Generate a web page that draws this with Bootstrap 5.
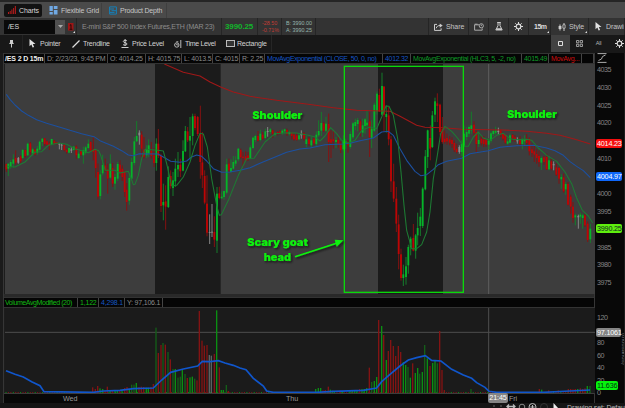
<!DOCTYPE html>
<html lang="en">
<head>
    <meta charset="UTF-8">
    <meta name="viewport" content="width=device-width, initial-scale=1.0">
    <title>/ES Charts</title>
    <link href="https://cdn.jsdelivr.net/npm/bootstrap@5.3.0/dist/css/bootstrap.min.css" rel="stylesheet">
    <style>
        body {
            width: 625px;
            height: 408px;
            background: #1d1d1d;
            color: #c4c4c4;
            font-family: "Liberation Sans", Arial, sans-serif;
            font-size: 7px;
            line-height: 1;
            letter-spacing: -0.1px;
            white-space: nowrap;
        }
        svg { display: block; flex: none; }
        .top-strip { height: 2px; background: #252525; }

        /* Tabs */
        .tab-row { height: 16px; background: #4a4a4a; padding-left: 4px; }
        .tab { height: 15px; border-right: 1px solid #3f3f3f; color: #c6c6c6; }
        .tab svg { margin-right: 3px; }
        .tab-charts { width: 38px; height: 13px; padding-left: 4px; background: #121212; border: 0; border-radius: 2px; color: #d8d8d8; }
        .tab-grid { width: 60px; padding-left: 7px; }
        .tab-depth { width: 65px; padding-left: 7px; letter-spacing: -0.2px; }

        /* Symbol row */
        .symbol-row { height: 17px; background: #333; padding-left: 4px; }
        .symbol-row > div { height: 17px; border-right: 1px solid #252525; }
        .symbol-row .symbol-box { width: 51px; height: 14px; padding-left: 4px; background: #0a0a0a; border: 0; color: #ddd; }
        .symbol-row .symbol-drop { width: 10px; height: 14px; background: #505050; border: 0; }
        .link-cell { width: 12px; padding-left: 3px; }
        .desc-cell { width: 145px; padding-left: 5px; color: #8c8c8c; letter-spacing: -0.23px; }
        .price-cell { width: 36px; padding-left: 3px; color: #12b52b; font-size: 8px; font-weight: bold; letter-spacing: -0.1px; }
        .change-cell { width: 24px; padding-left: 4px; color: #c23c35; font-size: 5.4px; line-height: 7px; letter-spacing: 0; }
        .quote-cell { width: 34px; padding-left: 4px; color: #95b5ad; font-size: 5.4px; line-height: 7px; letter-spacing: 0; }
        .share-cell { width: 41px; padding-left: 5px; border-left: 1px solid #252525; }
        .share-cell svg, .style-cell svg { margin-right: 3px; }
        .draw-cell svg { margin-right: 4px; }
        .icon-cell { width: 20px; }
        .time-cell { width: 22px; padding-left: 5px; color: #ddd; font-weight: bold; letter-spacing: -0.5px; }
        .style-cell { width: 38px; padding-left: 7px; }
        .draw-cell { width: 36px; padding-left: 6px; overflow: hidden; }
        .has-menu { position: relative; }
        .has-menu::after { content: ""; position: absolute; right: 1px; bottom: 2px; border: 1px solid transparent; border-right-color: #ddd; border-bottom-color: #ddd; }

        /* Drawing tools */
        .tool-row { height: 18px; background: #181818; padding-left: 4px; color: #d2d2d2; letter-spacing: -0.25px; }
        .tool-row > div { height: 17px; }
        .tool-pin { width: 19px; border-right: 1px solid #222; }
        .tool-pointer { width: 47px; padding-left: 6px; }
        .tool-line { width: 50px; padding-left: 2px; }
        .tool-price { width: 53px; padding-left: 1px; }
        .tool-time { width: 51px; padding-left: 1px; letter-spacing: -0.35px; }
        .tool-rect { width: 48px; padding-left: 2px; border-right: 1px solid #262626; letter-spacing: -0.2px; }
        .tool-row svg { margin-right: 3px; }
        .tool-row .tool-pointer svg { margin-right: 4px; }
        .tool-row .tool-btn svg { margin: 0; }
        .tool-row .tool-rect svg { margin-right: 2px; }
        .tool-btn { width: 19px; }
        .tool-btn.on { background: #414141; }
        .tool-all { font-size: 5.5px; color: #b5b5b5; }
        .tool-gear { width: 17px; padding-left: 7px; overflow: hidden; }

        /* Chart panes */
        .gutter { width: 4px; background: #1b1b1b; border-right: 1px solid #363636; }
        .panes { width: 591px; border-right: 1px solid #363636; }
        .data-row, .vol-row { height: 11px; background: #050505; border-top: 1px solid #333; border-bottom: 1px solid #333; color: #8b8b8b; font-size: 7px; letter-spacing: -0.2px; }
        .data-row { display: grid; grid-template-columns: 41px 63px 38px 36px 31px 27px 25px 118px 28px 111px 27px 33px 12px; }
        .data-row > span, .vol-row > span { padding: 1px 0 0 2px; border-right: 1px solid #444; overflow: hidden; line-height: 8px; }
        .data-row .title { color: #eee; font-weight: bold; letter-spacing: -0.15px; padding-left: 1px; }
        .data-row .study { letter-spacing: -0.38px; }
        .data-row .study-value { letter-spacing: -0.3px; }
        .blue { color: #1657c4; }
        .green { color: #0f9c28; }
        .red { color: #cf0d0d; }
        .price-pane { background: #3d3d3d; margin-left: 1px; }
        .pane-gap { height: 3px; background: #292929; }
        .vol-pane { background: #1b1b1b; margin-left: 1px; }
        .vol-row .vol-name { width: 74px; padding-left: 1px; color: #12b812; letter-spacing: -0.42px; }
        .vol-a { width: 21px; color: #12b812; }
        .vol-b { width: 26px; }
        .vol-c { width: 38px; }
        .time-axis { position: relative; height: 10px; background: #080808; border-top: 1px solid #3c3c3c; color: #9a9a9a; font-size: 7.2px; }
        .time-axis span { position: absolute; top: 1px; }
        .wed { left: 59px; }
        .thu { left: 282px; }
        .fri { left: 505px; }
        .time-axis .cursor-time { left: 484px; top: -1px; width: 20px; height: 10px; border-radius: 2px; background: #858585; color: #fff; line-height: 10px; text-align: center; }

        /* Value axis */
        .value-axis { position: relative; width: 29px; background: #080808; color: #858585; font-size: 7.2px; letter-spacing: -0.5px; overflow: hidden; }
        .scale-icon { height: 10px; padding-left: 2px; }
        .price-scale > div { height: 17.78px; line-height: 17.78px; padding-left: 2px; }
        .price-scale { margin-top: -2px; }
        .vol-scale { position: absolute; top: 259px; left: 2px; }
        .vol-scale > div { height: 12.5px; line-height: 12.5px; }
        .tag { position: absolute; left: 1px; width: 26px; height: 9px; padding-left: 1px; border-radius: 2px; color: #fff; line-height: 9px; letter-spacing: -0.2px; }
        .tag-red { top: 86px; background: #f50f0f; }
        .tag-blue { top: 119px; background: #0e67fa; }
        .tag-last { top: 171px; background: #5fef0e; color: #122; }
        .tag-cursor { top: 275px; width: 25px; background: #858585; }
        .tag-vol { top: 328px; width: 22px; background: #06f50c; color: #031; }
        .axis-title { position: absolute; left: 26px; top: 280px; writing-mode: vertical-rl; font-size: 6px; letter-spacing: 0; color: #777; }

        .bottom-row { height: 5px; background: #151515; padding-left: 493px; overflow: hidden; color: #bbb; }
        .bottom-text { padding: 1px 0 0 7px; }

        .note { font-family: Inter, "Liberation Sans", sans-serif; font-weight: 900; font-size: 31px; fill: #0df20d; letter-spacing: 0; }
        .shade { fill: #1b1b1b; }
        .avg { fill: none; stroke-width: 3.2; stroke-linejoin: round; }
    </style>
</head>
<body class="d-flex flex-column overflow-hidden">
    <div class="top-strip"></div>

    <!-- Tabs -->
    <div class="tab-row d-flex align-items-center">
        <div class="tab tab-charts d-flex align-items-center">
            <svg width="8" height="8" viewBox="0 0 8 8" fill="#b51c1c"><path d="M0 6h1v2H0zM1.7 5h1v3h-1zM3.4 3.5h1V8h-1zM5.1 2h1v6h-1zM6.8 0h1.1v8H6.8z"/></svg>Charts
        </div>
        <div class="tab tab-grid d-flex align-items-center">
            <svg width="9" height="9" viewBox="0 0 9 9" fill="#70a9e4"><path d="M.5 0h3.3v5H.5zM4.8 0h3.7v3H4.8zM.5 6h3.3v2.6H.5zM4.8 4h3.7v4.6H4.8z"/></svg>Flexible Grid
        </div>
        <div class="tab tab-depth d-flex align-items-center">
            <svg width="8" height="9" viewBox="0 0 8 9" fill="none" stroke="#147fb8"><path d="M.6.9h6.8v7.2H.6zM1 3h4M2.5 4.7H7M1 6.4h4.5"/></svg>Product Depth
        </div>
    </div>

    <!-- Symbol and quote -->
    <div class="symbol-row d-flex align-items-center">
        <div class="symbol-box d-flex align-items-center">/ES</div>
        <div class="symbol-drop d-flex align-items-center justify-content-center">
            <svg width="5" height="3" viewBox="0 0 5 3" fill="#aaa"><path d="M0 0h5L2.5 3z"/></svg>
        </div>
        <div class="link-cell has-menu d-flex align-items-center">
            <svg width="6" height="8" viewBox="0 0 6 8" fill="none"><rect width="5.5" height="7.5" fill="#9e1616"/><path d="M1.8 2.4 3 1.6v4.6M1.6 6.3h2.8" stroke="#260606"/></svg>
        </div>
        <div class="desc-cell d-flex align-items-center">E-mini S&amp;P 500 Index Futures,ETH (MAR 23)</div>
        <div class="price-cell d-flex align-items-center">3990.25</div>
        <div class="change-cell d-flex flex-column justify-content-center"><span>-28.50</span><span>-0.71%</span></div>
        <div class="quote-cell d-flex flex-column justify-content-center"><span>B: 3990.00</span><span>A: 3990.25</span></div>
        <div class="share-cell ms-auto d-flex align-items-center">
            <svg width="9" height="8" viewBox="0 0 9 8" fill="none" stroke="#ccc"><path d="M3 1.4H.5v6h6.6V5.3"/><path d="M2.2 5.3c.4-2 1.8-2.8 4-2.8"/><path d="M5.7.4 8.7 2.6 5.7 4.8z" fill="#ccc" stroke="none"/></svg>Share
        </div>
        <div class="icon-cell d-flex align-items-center justify-content-center">
            <svg width="10" height="8" viewBox="0 0 10 8" fill="none" stroke="#aaa"><path d="M5 1.8H.6v5.4h7.6V5.4M.6 1.2h3"/><circle cx="7.3" cy="2.8" r="2.1"/><path d="M7.3 1.6v1.5"/></svg>
        </div>
        <div class="icon-cell d-flex align-items-center justify-content-center">
            <svg width="8" height="9" viewBox="0 0 8 9" fill="none" stroke="#ccc"><path d="M2.2.5h3.6M3 .5v3.2L.8 8h6.4L5 3.7V.5"/><path d="M2 6.2h4L7 8H1z" fill="#ccc" stroke="none"/></svg>
        </div>
        <div class="icon-cell d-flex align-items-center justify-content-center">
            <svg width="9" height="9" viewBox="0 0 9 9" fill="none" stroke="#ddd"><circle cx="4.5" cy="4.5" r="2.3" stroke-width="1.2"/><path d="M4.5 0v2M4.5 7v2M0 4.5h2M7 4.5h2M1.3 1.3l1.4 1.4M6.3 6.3l1.4 1.4M1.3 7.7l1.4-1.4M6.3 2.7l1.4-1.4"/></svg>
        </div>
        <div class="time-cell has-menu d-flex align-items-center">15m</div>
        <div class="style-cell has-menu d-flex align-items-center">
            <svg width="8" height="8" viewBox="0 0 8 8"><path d="M2 1.5v6" stroke="#ccc"/><path d="M.6 3h2.8v3H.6z" fill="#ccc"/><path d="M6 0v8" stroke="#ccc"/><path d="M4.9 1.8h2.2v3.4H4.9z" fill="#333" stroke="#ccc" stroke-width=".8"/></svg>Style
        </div>
        <div class="draw-cell d-flex align-items-center">
            <svg width="7" height="9" viewBox="0 0 7 9" fill="#e2e2e2"><path d="M.5 0v7.3l1.9-1.7 1.2 3 1.5-.6-1.3-2.9H6.500z"/></svg>Drawings
        </div>
    </div>

    <!-- Drawing tools -->
    <div class="tool-row d-flex">
        <div class="tool-pin d-flex align-items-center justify-content-center">
            <svg width="5" height="8" viewBox="0 0 5 8" fill="#ccc"><path d="M1 0h3v2.600l1 1.500H3v3.400H2V4.100H0l1-1.500z"/></svg>
        </div>
        <div class="tool-pointer d-flex align-items-center">
            <svg width="7" height="9" viewBox="0 0 7 9" fill="#e2e2e2"><path d="M.5 0v7.300l1.900-1.700 1.200 3 1.500-.6-1.300-2.900h2.700z"/></svg>Pointer
        </div>
        <div class="tool-line d-flex align-items-center">
            <svg width="8" height="8" viewBox="0 0 8 8"><path d="M.5 7.500 7.500.5" stroke="#ddd" stroke-width="1.300"/></svg>Trendline
        </div>
        <div class="tool-price d-flex align-items-center">
            <svg width="8" height="9" viewBox="0 0 8 9" fill="none" stroke="#ccc"><path d="M6 2C5.500 1 2.300 1 2.300 2.500 2.300 4 6 3.300 6 5 6 6.500 2.700 6.500 2 5.500M4.100 0v7M.5 8.500h7"/></svg>Price Level
        </div>
        <div class="tool-time d-flex align-items-center">
            <svg width="8" height="8" viewBox="0 0 8 8" fill="none" stroke="#bbb"><circle cx="2.800" cy="5" r="2.200"/><path d="M2.800 3.800V5h1M6.800 0v8M2.300 1.800h2"/></svg>Time Level
        </div>
        <div class="tool-rect d-flex align-items-center">
            <svg width="9" height="7" viewBox="0 0 9 7" fill="#333" stroke="#bbb"><rect x=".5" y=".5" width="8" height="6"/></svg>Rectangle
        </div>
        <div class="tool-btn on ms-auto d-flex align-items-center justify-content-center">
            <svg width="5" height="5" viewBox="0 0 5 5" fill="none" stroke="#ddd"><path d="M.5.5h4v4h-4z"/></svg>
        </div>
        <div class="tool-btn d-flex align-items-center justify-content-center">
            <svg width="7" height="7" viewBox="0 0 7 7" fill="none" stroke="#aaa" stroke-width=".9"><path d="M.5.500h2.300v2.300H.5zM4.200.500h2.300v2.300H4.200zM.5 4.200h2.300v2.300H.5zM4.200 4.200h2.300v2.300H4.200z"/></svg>
        </div>
        <div class="tool-btn tool-all d-flex align-items-center justify-content-center">All</div>
        <div class="tool-gear d-flex align-items-center">
            <svg width="9" height="9" viewBox="0 0 9 9" fill="none" stroke="#ddd"><circle cx="4.500" cy="4.500" r="2.300" stroke-width="1.200"/><path d="M4.500 0v2M4.500 7v2M0 4.500h2M7 4.500h2M1.300 1.300l1.400 1.400M6.300 6.300l1.400 1.400M1.300 7.700l1.400-1.400M6.300 2.700l1.400-1.400"/></svg>
        </div>
    </div>

    <!-- Charts -->
    <div class="d-flex">
        <div class="gutter"></div>
        <div class="panes">
            <div class="data-row">
                <span class="title">/ES 2 D 15m</span>
                <span>D: 2/23/23, 9:45 PM</span>
                <span>O: 4014.25</span>
                <span>H: 4015.75</span>
                <span>L: 4013.5</span>
                <span>C: 4015</span>
                <span>R: 2.25</span>
                <span class="study blue">MovAvgExponential (CLOSE, 50, 0, no)</span>
                <span class="study-value blue">4012.32</span>
                <span class="study green">MovAvgExponential (HLC3, 5, -2, no)</span>
                <span class="study-value green">4015.49</span>
                <span class="study-value red">MovAvg...</span>
                <span></span>
            </div>

            <!-- Three drawing units per pixel -->
            <svg class="price-pane" width="590" height="230" viewBox="15 6 1770 690">
                <defs>
                    <filter id="soft" x="-10%" y="-20%" width="125%" height="160%"><feDropShadow dx="4" dy="4" stdDeviation="3" flood-color="#111" flood-opacity=".8"/></filter>
                </defs>
                <path class="shade" d="M465 6h197v690H465zM1134 6h195v690h-195z"/>
                <path d="M1466 6v690" stroke="#5e5e5e" stroke-width="3"/>
                <g id="candles"></g>
                <polyline class="avg" stroke="#a01818" points="493,6 550,31 600,42 630,60 662,75 700,90 750,103 830,115 925,127 1000,137 1070,145 1170,148 1200,163 1250,190 1275,196 1330,197 1385,202 1510,204 1580,208 1640,214 1680,220 1725,232 1771,246"/>
                <polyline class="avg" stroke="#1c50a0" points="19,97 30,112 45,129 65,147 85,160 110,173 140,184 175,194 210,205 245,215 282,224 300,236 340,253 365,266 385,279 400,281 418,275 474,276 495,288 512,298 540,301 560,297 575,285 590,279 605,283 620,297 640,320 665,331 690,330 720,325 750,317 780,304 820,287 860,271 900,261 930,258 975,248 1030,246 1050,244 1080,236 1120,228 1145,210 1165,208 1180,220 1200,260 1220,295 1245,328 1262,341 1280,338 1300,322 1315,308 1340,298 1385,289 1410,275 1465,266 1500,256 1550,251 1600,250 1640,258 1665,266 1690,280 1710,299 1730,313 1750,326 1771,347"/>
                <polyline class="avg" stroke="#1d7a33" points="19,313 45,315 75,300 105,270 125,269 145,250 175,243 200,247 225,260 265,272 285,262 296,266 302,280 316,325 345,325 360,333 385,328 392,345 400,368 405,367 415,340 425,290 435,262 474,265 490,267 500,305 515,372 530,370 550,345 570,300 585,250 600,214 610,216 622,255 635,350 650,430 658,460 664,458 685,415 715,340 740,290 762,289 795,240 825,215 860,212 890,213 925,220 945,225 960,237 975,222 992,197 1010,215 1025,235 1045,243 1065,235 1085,205 1110,195 1130,200 1145,165 1158,132 1167,133 1180,160 1193,230 1203,330 1212,430 1220,505 1235,560 1250,560 1265,548 1280,510 1290,450 1300,350 1312,280 1322,215 1335,193 1355,208 1370,225 1392,253 1405,253 1420,225 1435,210 1450,228 1470,235 1490,220 1510,214 1530,230 1550,233 1580,232 1595,235 1615,258 1640,280 1670,298 1695,330 1715,365 1730,408 1747,445 1765,462 1778,483"/>
                <rect x="1033" y="13" width="357" height="678" fill="none" stroke="#0bd80b" stroke-width="4"/>
                <g filter="url(#soft)">
                    <text class="note" x="757" y="171" textLength="150" lengthAdjust="spacingAndGlyphs">Shoulder</text>
                    <text class="note" x="1521" y="169" textLength="150" lengthAdjust="spacingAndGlyphs">Shoulder</text>
                    <text class="note" x="741" y="553" textLength="183" lengthAdjust="spacingAndGlyphs">Scary goat</text>
                    <text class="note" x="791" y="598" textLength="82" lengthAdjust="spacingAndGlyphs">head</text>
                    <path d="M885 584 1012 543" stroke="#0df20d" stroke-width="4.500"/>
                    <path d="M1030 535 1004 533 1010 554z" fill="#0df20d"/>
                </g>
            </svg>
            <div class="pane-gap"></div>
            <div class="vol-row d-flex">
                <span class="vol-name">VolumeAvgModified (20)</span>
                <span class="vol-a">1,122</span>
                <span class="vol-b blue">4,298.1</span>
                <span class="vol-c">Y: 97,106.1</span>
            </div>
            <svg class="vol-pane" width="590" height="85" viewBox="15 69 1770 255">
                <path d="M15 142h1770M1466 69v255" stroke="#4e4e4e" stroke-width="3"/>
                <g id="volume"></g>
                <polyline fill="none" stroke="#1056cc" stroke-width="5" points="18,257 45,268 70,276 95,290 120,302 132,320 280,322 310,318 360,316 400,311 460,309 485,285 512,262 550,252 593,243 607,229 630,230 655,227 675,234 700,241 720,249 738,254 760,280 790,303 800,318 820,322 950,322 1000,319 1090,316 1130,309 1145,290 1170,268 1200,243 1225,225 1250,218 1276,212 1295,226 1323,228 1355,253 1390,270 1415,280 1430,293 1455,307 1467,319 1490,322 1630,322 1710,318 1770,315"/>
            </svg>
            <div class="time-axis">
                <span class="wed">Wed</span>
                <span class="thu">Thu</span>
                <span class="cursor-time">21:45</span>
                <span class="fri">Fri</span>
            </div>
        </div>
        <div class="value-axis">
            <div class="scale-icon">
                <svg width="10" height="10" viewBox="0 0 10 10" fill="none" stroke="#aaa"><path d="M.5.600h9M.5 9.400h9M1.500 7.500l3-1.500 1-2.500 3-1.500"/></svg>
            </div>
            <!-- Steps covered by a value tag stay blank -->
            <div class="price-scale">
                <div>4035</div>
                <div>4030</div>
                <div>4025</div>
                <div>4020</div>
                <div></div>
                <div>4010</div>
                <div></div>
                <div>4000</div>
                <div>3995</div>
                <div></div>
                <div>3985</div>
                <div>3980</div>
                <div>3975</div>
            </div>
            <div class="vol-scale">
                <div>120</div>
                <div></div>
                <div>80</div>
                <div>60</div>
                <div>40</div>
                <div>20</div>
                <div>0</div>
            </div>
            <div class="tag tag-red">4014.23</div>
            <div class="tag tag-blue">4004.97</div>
            <div class="tag tag-last">3990.25</div>
            <div class="tag tag-cursor">97.1061</div>
            <div class="tag tag-vol">11.636</div>
            <div class="axis-title">(thousands)</div>
        </div>
    </div>

    <!-- Footer toolbar -->
    <div class="bottom-row d-flex">
        <svg width="67" height="8" viewBox="0 0 67 8" fill="none" stroke="#bbb"><path d="M0 3h2M7 3h2" stroke="#666"/><path d="M14 3.500h8M16 1.500l-2 2 2 2M20 1.500l2 2-2 2" stroke-width="1.300"/><circle cx="29" cy="4" r="2.800" stroke="#888"/><circle cx="39.500" cy="4" r="3.500"/><path d="M37.500 4h4M39.500 2v4"/><circle cx="51" cy="4" r="3.500" stroke="#333"/><path d="M60.500 0v7l2-1.500h3z" fill="#eee" stroke="none"/></svg>
        <div class="bottom-text">Drawing set: Default</div>
    </div>

    <!-- Bootstrap JS -->
    <script src="https://cdn.jsdelivr.net/npm/bootstrap@5.3.0/dist/js/bootstrap.bundle.min.js"></script>

    <script>
        const svgNs = "http://www.w3.org/2000/svg";

        // x, high, low, body top, body bottom, colour (g up, r down, w flat)
        const candles = `
19 305 330 306 322 r,25 305 342 305 320 g,32 294 320 300 314 g,40 277 317 292 305 g,47 265 308 288 302 r,55 285 305 288 302 w,62 280 303 283 298 r,68 261 292 264 288 g,76 262 287 264 282 r,83 242 282 245 280 g,91 240 278 244 270 r,98 257 281 262 274 g,105 260 280 263 277 r,112 252 278 260 272 g,119 236 266 239 263 g,127 228 252 230 240 g,134 228 252 229 246 r,141 235 250 238 248 r,148 238 264 244 250 r,155 230 250 231 246 g,163 234 248 236 245 r,170 240 248 241 246 r,178 243 262 245 248 w,185 245 264 248 251 w,193 247 268 249 264 r,200 260 275 263 270 r,207 256 274 258 272 g,214 256 273 262 266 w,221 252 266 254 264 g,229 250 290 254 280 r,236 268 291 275 288 g,243 265 282 268 278 r,250 254 305 265 280 g,257 252 277 256 272 g,265 232 262 245 258 g,272 238 270 240 266 r,280 226 295 262 270 r,287 262 347 262 318 r,294 305 412 330 404 r,301 325 412 337 402 g,308 278 340 309 334 g,316 290 330 310 325 r,323 305 395 322 350 r,331 277 350 305 347 g,338 303 375 318 365 r,345 335 383 345 365 g,353 300 357 306 350 g,360 295 340 308 330 r,367 310 357 320 345 r,374 325 405 330 390 r,380 363 446 383 420 r,388 335 428 348 416 g,395 288 355 300 350 g,403 225 310 238 303 g,410 177 240 222 238 g,418 205 248 212 220 w,425 208 285 218 260 r,432 225 290 263 284 r,440 250 288 262 280 g,446 232 285 250 275 g,454 240 290 266 282 r,462 258 315 280 303 r,469 229 326 245 303 g,475 201 288 245 282 r,
483 275 450 282 432 r,490 365 475 420 430 g,497 370 503 418 434 r,505 313 438 345 435 g,512 325 380 342 372 r,519 330 402 355 378 g,526 290 375 320 358 g,534 270 345 309 322 g,541 290 345 308 328 r,549 235 328 267 326 g,556 192 270 207 268 g,563 195 240 208 235 r,570 165 290 222 236 g,578 155 250 163 222 g,585 155 205 162 198 r,593 162 222 165 216 r,601 131 350 216 300 r,607 210 378 301 340 r,614 325 427 342 422 r,621 340 523 425 512 r,629 457 546 510 513 w,636 426 525 509 512 w,643 463 555 510 533 r,651 375 573 395 536 g,658 374 412 394 408 r,665 388 410 404 409 g,672 386 413 387 405 g,680 290 397 307 392 g,687 290 330 305 325 r,693 292 332 318 330 g,700 282 323 300 320 g,707 283 312 295 305 g,715 258 298 260 292 g,722 260 290 264 286 r,729 270 315 284 288 r,737 268 298 283 296 r,744 270 297 280 290 r,751 250 292 256 288 g,759 224 262 227 258 g,766 218 240 222 234 g,774 207 238 222 236 r,781 203 238 215 234 g,788 210 234 218 230 r,796 200 232 208 228 g,803 195 224 207 210 w,811 198 216 202 210 g,818 203 228 205 215 r,825 210 224 214 218 g,833 208 220 210 216 r,840 205 218 208 214 r,847 202 218 206 213 g,854 200 214 202 208 g,861 200 222 204 216 r,868 206 220 211 216 g,875 210 232 212 222 r,882 213 236 218 232 r,890 214 236 220 234 r,897 215 235 220 232 g,904 205 230 215 220 w,912 210 236 214 230 r,919 222 256 232 246 g,927 225 252 230 246 r,
934 225 258 235 250 g,942 226 250 230 244 r,949 208 252 218 246 g,956 175 225 207 220 g,964 150 222 183 206 g,971 180 210 184 206 r,978 164 210 185 206 g,986 155 300 186 240 r,993 205 288 232 242 r,1000 208 260 232 238 r,1008 225 258 234 240 g,1015 225 257 234 246 r,1022 238 273 245 264 r,1030 220 266 236 262 g,1037 230 262 238 243 g,1044 235 272 240 250 r,1051 208 260 216 255 g,1059 180 232 184 226 g,1066 170 205 180 192 g,1073 168 208 174 186 g,1081 172 223 178 205 r,1088 170 225 190 212 g,1095 168 215 172 192 g,1101 147 195 182 190 g,1109 150 285 178 226 r,1115 175 258 200 228 g,1123 122 210 128 206 g,1131 88 158 95 148 g,1138 80 150 99 148 r,1146 32 160 72 158 g,1152 72 208 74 158 r,1159 130 212 156 165 g,1166 135 250 160 232 r,1173 222 390 232 358 r,1181 305 420 358 410 r,1189 375 510 410 485 r,1196 458 622 487 576 r,1203 560 656 577 648 r,1210 608 672 637 648 g,1218 585 668 613 645 g,1225 548 635 555 610 g,1232 524 580 530 556 g,1240 486 568 528 566 r,1247 516 590 520 566 g,1253 452 550 498 520 g,1261 438 522 464 492 g,1268 376 498 380 492 g,1276 264 385 283 382 g,1283 203 318 205 285 g,1291 190 295 228 260 r,1297 147 258 160 255 g,1305 107 180 118 158 g,1312 94 180 124 132 r,1320 125 220 128 210 r,1327 165 245 200 240 r,1334 205 245 230 240 r,1341 215 248 228 238 r,1349 222 250 232 242 r,1356 226 258 234 246 r,1363 235 270 243 264 r,1370 245 274 260 270 r,1378 250 275 255 270 w,1385 235 282 245 270 g,
1392 190 272 215 255 g,1400 195 235 210 225 g,1407 190 225 195 215 g,1414 149 215 190 205 g,1422 178 225 188 212 r,1429 205 270 210 246 r,1436 210 255 234 246 g,1444 222 250 230 244 r,1451 222 255 232 246 r,1458 230 255 233 248 r,1466 228 262 236 248 g,1473 208 242 214 236 g,1480 203 222 207 216 g,1487 194 218 206 212 g,1495 197 218 206 210 w,1502 202 225 205 218 r,1509 212 235 215 230 r,1516 216 245 218 242 r,1523 228 248 238 245 g,1530 214 244 220 242 g,1538 216 238 219 229 r,1545 220 240 226 234 r,1552 226 245 234 238 w,1560 222 252 234 246 r,1567 228 262 234 246 g,1574 220 250 232 238 g,1580 216 248 232 243 r,1588 226 280 230 268 r,1596 245 285 262 273 r,1603 250 300 268 278 r,1610 262 305 276 288 r,1617 266 314 282 300 r,1624 283 324 288 302 g,1632 282 308 286 300 r,1640 275 324 285 322 r,1647 282 325 295 322 g,1654 290 325 298 320 r,1661 298 325 306 310 w,1669 305 342 316 338 r,1677 315 365 318 350 r,1684 337 380 345 352 g,1691 335 392 346 388 r,1697 360 398 366 382 g,1704 360 430 366 428 r,1712 398 455 404 434 r,1719 420 482 434 468 r,1726 455 490 460 466 g,1735 458 500 462 466 w,1741 452 485 458 464 g,1748 455 500 460 468 g,1755 455 495 460 490 r,1763 478 540 485 534 r,1771 485 543 500 532 g`;

        // x, bar top, colour
        const volumes = `
278 307 r,286 312 r,293 303 r,300 310 g,308 312 g,315 318 r,322 305 r,330 316 g,337 315 r,345 317 g,352 316 g,359 318 r,366 316 g,374 309 r,381 306 r,388 315 g,395 299 d,402 299 d,409 294 g,417 306 r,424 305 r,431 306 r,439 308 g,445 308 g,453 306 r,460 297 r,468 128 d,475 204 r,483 180 r,489 174 d,496 179 r,504 201 d,511 223 r,519 252 d,526 252 g,534 278 d,541 275 d,547 252 g,555 267 d,562 279 r,570 277 g,577 275 g,584 281 d,591 286 r,598 78 r,606 167 r,613 182 r,621 180 r,628 210 w,634 212 w,643 207 r,650 76 g,658 247 r,664 315 g,670 315 g,679 300 d,685 318 r,
947 312 g,955 309 g,962 309 g,969 316 r,976 315 r,985 305 r,991 314 g,998 317 g,1021 317 r,1028 318 g,1050 317 g,1057 315 g,1064 315 g,1071 317 g,1079 312 r,1086 312 g,1093 312 g,1100 309 g,1108 248 r,1115 291 d,1123 288 g,1130 276 g,1136 105 r,1145 123 g,1151 150 r,1159 225 g,1165 198 r,1172 165 r,1180 183 r,1187 213 r,1195 183 r,1202 201 r,1210 231 g,1217 240 g,1224 246 d,1231 278 g,1238 235 r,
1246 264 g,1253 249 g,1259 266 d,1267 261 g,1274 180 d,1282 220 g,1290 243 r,1298 234 g,1305 228 g,1312 235 d,1319 138 r,1326 255 r,1333 315 r,1413 312 d,1618 312 r,1625 314 g,1646 316 r,1675 316 r,1705 312 r,1712 312 r,1719 313 r,1726 312 r,1733 312 g,1741 310 r,1748 312 r,1755 310 r,1762 303 g,1770 303 d`;

        const bodyColors = { g: "#05b529", r: "#bd0505", w: "#8a8a8a" };
        const wickColors = { g: "#157c2b", r: "#851111", w: "#858585" };
        const barColors = { g: "#0a8f12", d: "#145f18", r: "#831313", w: "#5b6060" };

        function addRect(parent, x, top, width, height, color) {
            const rect = document.createElementNS(svgNs, "rect");
            rect.setAttribute("x", x - width / 2);
            rect.setAttribute("y", top);
            rect.setAttribute("width", width);
            rect.setAttribute("height", height);
            rect.setAttribute("fill", color);
            parent.appendChild(rect);
        }

        const candleGroup = document.getElementById("candles");
        candles.split(",").forEach(row => {
            const [x, high, low, top, bottom, kind] = row.trim().split(" ");
            addRect(candleGroup, +x, +high, 3, low - high, wickColors[kind]);
            addRect(candleGroup, +x, +top, 5.5, bottom - top, bodyColors[kind]);
        });

        const volumeGroup = document.getElementById("volume");
        // Quiet hours only show a sliver above the baseline
        for (let x = 18, i = 0; x < 1770; x += 7.3, i++) {
            addRect(volumeGroup, x, 321, 3, 3, i % 3 ? barColors.r : barColors.g);
        }
        volumes.split(",").forEach(row => {
            const [x, top, kind] = row.trim().split(" ");
            addRect(volumeGroup, +x, +top, 4, 324 - top, barColors[kind]);
        });
    </script>
</body>
</html>
